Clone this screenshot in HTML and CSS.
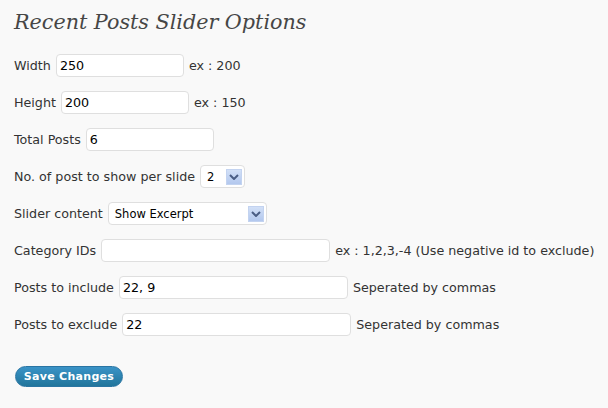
FILE: index.html
```html
<!DOCTYPE html>
<html>
<head>
<meta charset="utf-8">
<link rel="stylesheet" href="styles.css">
</head>
<body>
<div class="wrap">
  <h2 class="title">Recent Posts Slider Options</h2>
  <div class="form">
    <div class="row"><span class="label">Width</span><span class="field w128">250</span><span class="hint">ex : 200</span></div>
    <div class="row"><span class="label">Height</span><span class="field w128">200</span><span class="hint">ex : 150</span></div>
    <div class="row"><span class="label">Total Posts</span><span class="field w128">6</span></div>
    <div class="row"><span class="label">No. of post to show per slide</span><span class="select w45"><span class="sel-text">2</span><span class="arrow"><svg width="10" height="6" viewBox="0 0 10 6"><path d="M1 1 L5 5 L9 1" fill="none" stroke="#4a5d84" stroke-width="2"/></svg></span></span></div>
    <div class="row"><span class="label">Slider content</span><span class="select w159"><span class="sel-text">Show Excerpt</span><span class="arrow"><svg width="10" height="6" viewBox="0 0 10 6"><path d="M1 1 L5 5 L9 1" fill="none" stroke="#4a5d84" stroke-width="2"/></svg></span></span></div>
    <div class="row"><span class="label">Category IDs</span><span class="field w229"></span><span class="hint">ex : 1,2,3,-4 (Use negative id to exclude)</span></div>
    <div class="row"><span class="label">Posts to include</span><span class="field w229">22, 9</span><span class="hint">Seperated by commas</span></div>
    <div class="row"><span class="label">Posts to exclude</span><span class="field w229">22</span><span class="hint">Seperated by commas</span></div>
  </div>
  <div class="actions"><span class="button">Save Changes</span></div>
</div>
</body>
</html>
```
FILE: styles.css
```css
html, body {
  margin: 0;
  padding: 0;
  background: #f9f9f9;
}
.wrap {
  padding: 0 0 0 14px;
  font-family: "DejaVu Sans", Verdana, sans-serif;
  font-size: 12.7px;
  color: #333;
}
.title {
  margin: 0;
  padding-top: 7px;
  height: 54px;
  box-sizing: border-box;
  font-family: "DejaVu Serif", Georgia, serif;
  font-style: italic;
  font-weight: normal;
  font-size: 20.7px;
  color: #464646;
  line-height: 30px;
  white-space: nowrap;
}
.form {
  display: flex;
  flex-direction: column;
  gap: 14px;
}
.row {
  display: flex;
  align-items: center;
  height: 23px;
  gap: 5px;
  white-space: nowrap;
}
.row > * {
  flex-shrink: 0;
}
.field, .select {
  box-sizing: border-box;
  height: 23px;
  background: #fff;
  border: 1px solid #dfdfdf;
  border-radius: 4px;
  color: #000;
  display: flex;
  align-items: center;
  padding: 0 3px;
}
.w128 { width: 128px; }
.w229 { width: 229px; }
.w45 { width: 45px; }
.w159 { width: 159px; }
.select {
  justify-content: space-between;
  padding: 0 2px 0 6px;
  font-size: 11.5px;
}
.arrow {
  width: 16px;
  height: 16px;
  box-sizing: border-box;
  background: linear-gradient(#d2e0f7, #b3c8ee);
  border: 1px solid #c3d3f0;
  display: flex;
  align-items: center;
  justify-content: center;
}
.arrow svg { display: block; }
.actions {
  padding-top: 30px;
}
.button {
  display: inline-flex;
  align-items: center;
  justify-content: center;
  width: 108px;
  height: 21px;
  margin-left: 1px;
  border-radius: 11px;
  background: linear-gradient(#3a93c7, #21759b);
  border: 1px solid #2a75a3;
  box-sizing: border-box;
  color: #fff;
  font-weight: bold;
  font-size: 11px;
  letter-spacing: 0.3px;
}
```
